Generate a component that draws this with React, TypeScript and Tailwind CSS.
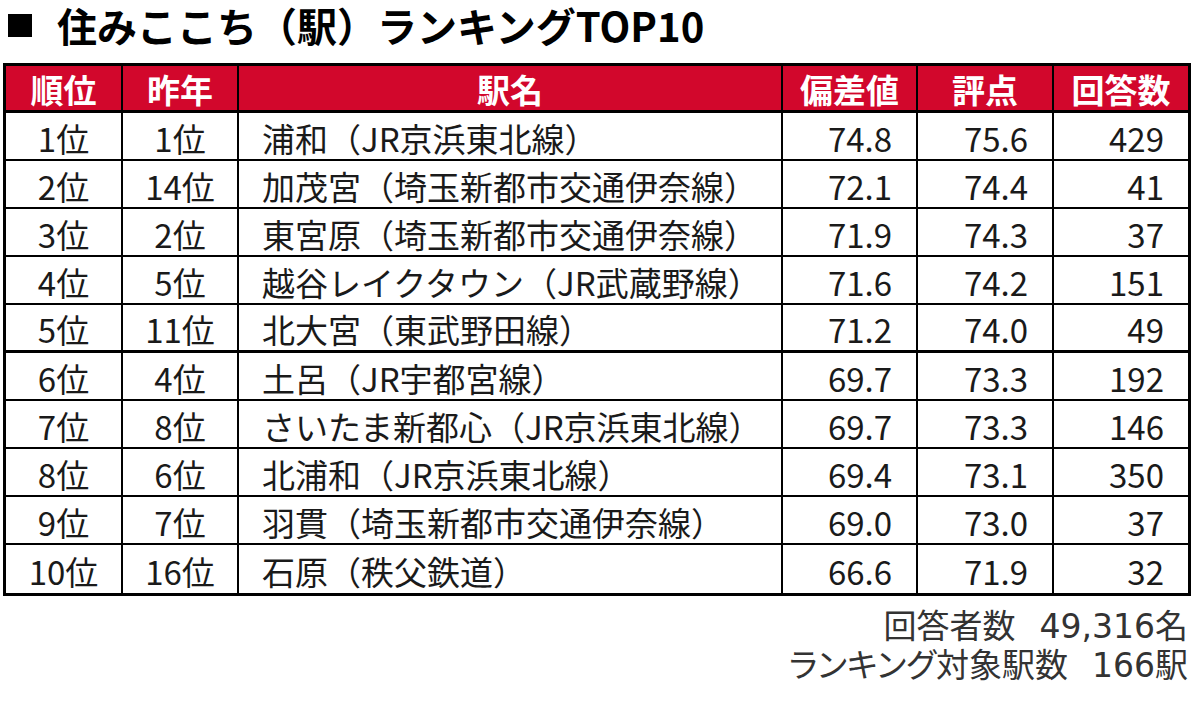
const rows = [
  { rank: "1位", prev: "1位", name: "浦和（JR京浜東北線）", dev: "74.8", score: "75.6", count: "429" },
  { rank: "2位", prev: "14位", name: "加茂宮（埼玉新都市交通伊奈線）", dev: "72.1", score: "74.4", count: "41" },
  { rank: "3位", prev: "2位", name: "東宮原（埼玉新都市交通伊奈線）", dev: "71.9", score: "74.3", count: "37" },
  { rank: "4位", prev: "5位", name: "越谷レイクタウン（JR武蔵野線）", dev: "71.6", score: "74.2", count: "151" },
  { rank: "5位", prev: "11位", name: "北大宮（東武野田線）", dev: "71.2", score: "74.0", count: "49" },
  { rank: "6位", prev: "4位", name: "土呂（JR宇都宮線）", dev: "69.7", score: "73.3", count: "192" },
  { rank: "7位", prev: "8位", name: "さいたま新都心（JR京浜東北線）", dev: "69.7", score: "73.3", count: "146" },
  { rank: "8位", prev: "6位", name: "北浦和（JR京浜東北線）", dev: "69.4", score: "73.1", count: "350" },
  { rank: "9位", prev: "7位", name: "羽貫（埼玉新都市交通伊奈線）", dev: "69.0", score: "73.0", count: "37" },
  { rank: "10位", prev: "16位", name: "石原（秩父鉄道）", dev: "66.6", score: "71.9", count: "32" },
];

const headers = ["順位", "昨年", "駅名", "偏差値", "評点", "回答数"];

export default function App() {
  return (
    <div
      className="w-[1200px] h-[703px] bg-white overflow-hidden text-[#1a1a1a]"
      style={{ fontFamily: '"Noto Sans CJK JP", "Noto Sans", sans-serif' }}
    >
      {/* Title */}
      <div className="h-[50px] flex items-center pl-[8px]">
        <div className="w-[24px] h-[23px] bg-black" />
        <h1 className="ml-[25px] text-[40px] font-bold leading-[50px] text-black">
          住みここち（駅）ランキングTOP10
        </h1>
      </div>

      {/* Ranking table */}
      <div className="mt-[13px] ml-[3px] w-[1188px] border-[3px] border-black">
        <div className="grid grid-cols-[117px_116px_544px_135px_136px_134px]">
          {headers.map((h, i) => (
            <div
              key={h}
              className={`h-[47px] bg-[#d2072c] border-b-[3px] border-black flex items-center justify-center pt-[2px] text-white font-bold text-[33px] leading-none ${
                i < 5 ? "border-r-2" : ""
              }`}
            >
              {h}
            </div>
          ))}

          {rows.map((r, ri) => {
            const bottom = ri === 9 ? "" : ri === 4 ? "border-b-[3px]" : "border-b-2";
            const cell = `h-[48px] border-black flex items-center pt-[4px] text-[33px] leading-none ${bottom}`;
            return [
              <div key={`${ri}a`} className={`${cell} border-r-2 justify-center`}>{r.rank}</div>,
              <div key={`${ri}b`} className={`${cell} border-r-2 justify-center`}>{r.prev}</div>,
              <div key={`${ri}c`} className={`${cell} border-r-2 pl-[23px] whitespace-nowrap`}>{r.name}</div>,
              <div key={`${ri}d`} className={`${cell} border-r-2 justify-end pr-[24px]`}>{r.dev}</div>,
              <div key={`${ri}e`} className={`${cell} border-r-2 justify-end pr-[24px]`}>{r.score}</div>,
              <div key={`${ri}f`} className={`${cell} justify-end pr-[24px]`}>{r.count}</div>,
            ];
          })}
        </div>
      </div>

      {/* Footer notes */}
      <div className="mt-[10px] pr-[12px] text-right text-[33px] leading-[36px] text-[#333]">
        <p>
          回答者数
          <span className="ml-[24px]" style={{ fontFamily: '"DejaVu Sans", sans-serif' }}>
            49,316
          </span>
          名
        </p>
        <p>
          <span className="[font-feature-settings:'palt']">ランキング</span>対象駅数
          <span className="ml-[24px]" style={{ fontFamily: '"DejaVu Sans", sans-serif' }}>
            166
          </span>
          駅
        </p>
      </div>
    </div>
  );
}
